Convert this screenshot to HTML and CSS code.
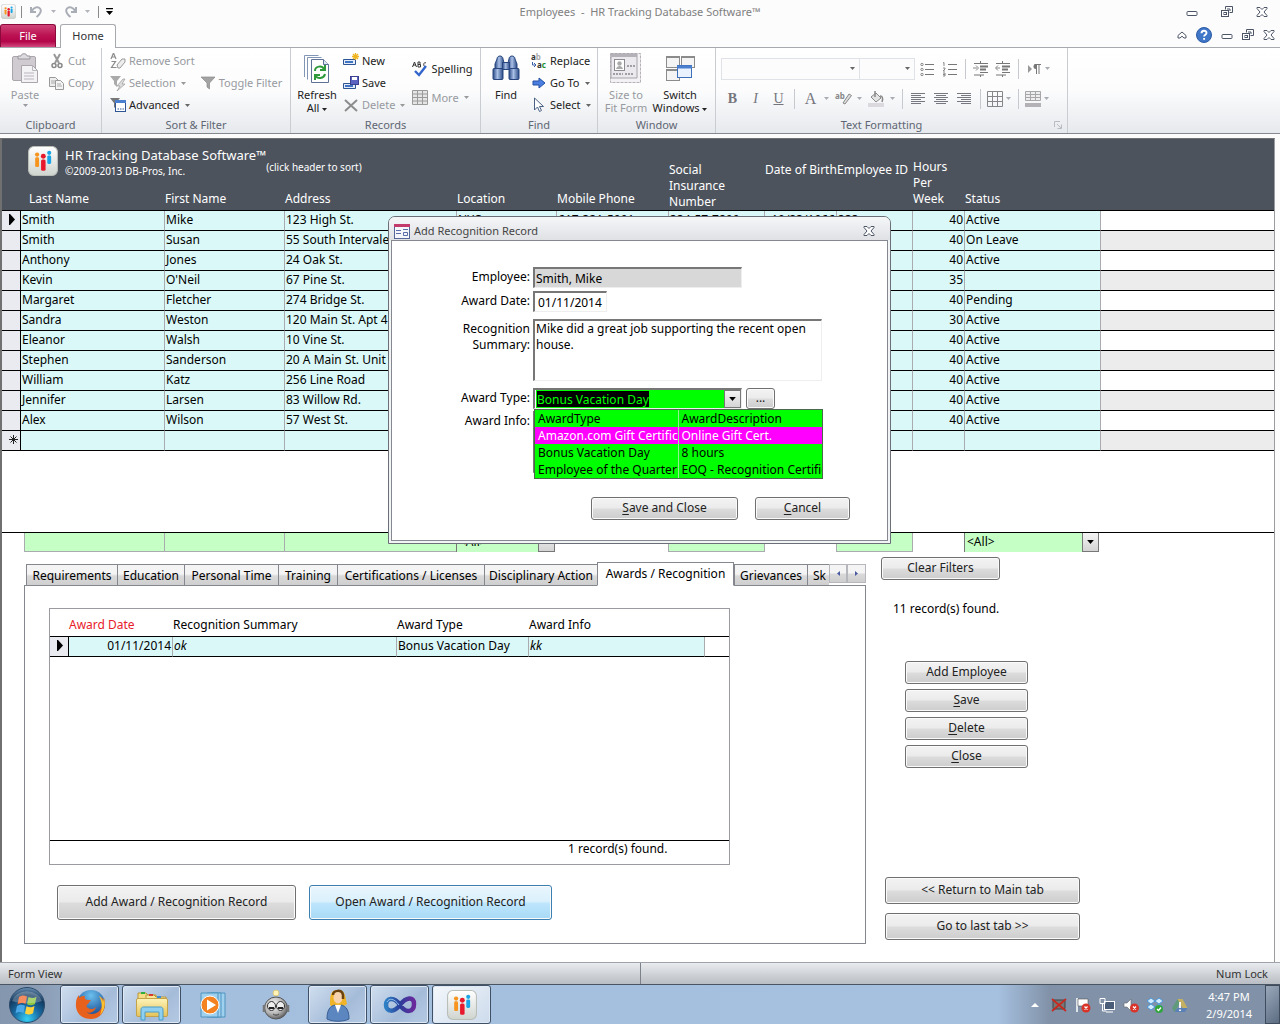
FILE: index.html
```html
<!DOCTYPE html>
<html lang="en">
<head>
<meta charset="utf-8">
<title>Employees - HR Tracking Database Software™</title>
<link rel="stylesheet" href="styles.css">
</head>
<body>
<svg class="defs" aria-hidden="true">
  <defs>
    <linearGradient id="gTile" x2="0" y2="1"><stop offset="0" stop-color="#fff"/><stop offset="1" stop-color="#cfd4cf"/></linearGradient>
    <linearGradient id="gBino" x2="1"><stop offset="0" stop-color="#2a4a86"/><stop offset=".45" stop-color="#a9c0e6"/><stop offset="1" stop-color="#2a4a86"/></linearGradient>
    <linearGradient id="gFolder" x2="0" y2="1"><stop offset="0" stop-color="#fdf3b8"/><stop offset="1" stop-color="#e6c35a"/></linearGradient>
    <linearGradient id="gInf" x2="1"><stop offset="0" stop-color="#2f7fc4"/><stop offset=".5" stop-color="#2b3f9a"/><stop offset="1" stop-color="#6a2a9c"/></linearGradient>
    <radialGradient id="gOrb" cx=".5" cy=".9" r=".9"><stop offset="0" stop-color="#35d0f5"/><stop offset=".4" stop-color="#1a6fa8"/><stop offset=".75" stop-color="#12395f"/><stop offset="1" stop-color="#6f93b5"/></radialGradient>
    <radialGradient id="gBot" cx=".4" cy=".35" r=".7"><stop offset="0" stop-color="#fff"/><stop offset=".6" stop-color="#b4b4b4"/><stop offset="1" stop-color="#555"/></radialGradient>
    <radialGradient id="gGlobe" cx=".5" cy=".2" r=".8"><stop offset="0" stop-color="#6bc0ee"/><stop offset="1" stop-color="#123f8a"/></radialGradient>
  </defs>
  <symbol id="logo" viewBox="0 0 28 28">
    <rect x=".5" y=".5" width="27" height="27" rx="5" fill="url(#gTile)" stroke="#b9beb9"/>
    <g fill="#f7941e"><circle cx="8.500" cy="8" r="2"/><rect x="6.700" y="10.600" width="3.600" height="9" rx="1.200"/></g>
    <g fill="#e8192c"><circle cx="14.300" cy="9.600" r="2.300"/><rect x="12.200" y="12.600" width="4.200" height="10.600" rx="1.400"/></g>
    <g fill="#19a5e8"><circle cx="19.800" cy="6.400" r="1.900"/><rect x="18" y="8.900" width="3.600" height="7.800" rx="1.200"/></g>
  </symbol>
  <symbol id="down" viewBox="0 0 5 3"><path d="M0 0h5L2.500 3z" fill="currentColor"/></symbol>
  <symbol id="w-min" viewBox="0 0 12 12"><rect x="1" y="5.500" width="10" height="4" rx=".8" fill="#fff" stroke="#4c5566"/></symbol>
  <symbol id="w-res" viewBox="0 0 12 12"><path d="M4.500 3.500v-3h7v6h-3" fill="none" stroke="#4c5566"/><path d="M6 3h3v2" fill="none" stroke="#4c5566"/><rect x=".5" y="4.500" width="7" height="6" fill="#fff" stroke="#4c5566"/><rect x="3" y="6.500" width="2.500" height="2" fill="none" stroke="#4c5566"/></symbol>
  <symbol id="w-x" viewBox="0 0 12 12"><path d="M1 1.500h3l2 2 2-2h3v1L8 6l3 3.500v1H8l-2-2-2 2H1v-1L4 6 1 2.500z" fill="#fff" stroke="#4c5566"/></symbol>
  <symbol id="seltri" viewBox="0 0 6 11"><path d="M0 0h1l5 5.500L1 11H0z"/></symbol>
</svg>

<header class="titlebar">
  <div class="quick">
    <svg class="app" width="15" height="15"><use href="#logo"/></svg>
    <span class="bar"></span>
    <button class="qbtn" aria-label="Undo"><svg width="13" height="13" viewBox="0 0 13 13"><path d="M1 2v5h5M1.500 6.500C4 2 8 1 10 3.500S10 9 6.500 12" fill="none" stroke="#a9adb5" stroke-width="2"/></svg></button>
    <svg class="dd" width="5" height="3"><use href="#down"/></svg>
    <button class="qbtn" aria-label="Redo"><svg width="13" height="13" viewBox="0 0 13 13"><path d="M12 2v5H7M11.500 6.500C9 2 5 1 3 3.500S3 9 6.500 12" fill="none" stroke="#a9adb5" stroke-width="2"/></svg></button>
    <svg class="dd" width="5" height="3"><use href="#down"/></svg>
    <span class="bar"></span>
    <button class="qbtn last" aria-label="Customize"><svg width="7" height="7" viewBox="0 0 7 7"><path d="M0 0h7v1.200H0zM0 3h7L3.500 7z"/></svg></button>
  </div>
  <h1 class="apptitle">Employees&nbsp; -&nbsp; HR Tracking Database Software™</h1>
  <div class="wincontrols">
    <button aria-label="Minimize"><svg width="12" height="12"><use href="#w-min"/></svg></button>
    <button aria-label="Restore"><svg width="12" height="12"><use href="#w-res"/></svg></button>
    <button aria-label="Close"><svg width="12" height="12"><use href="#w-x"/></svg></button>
  </div>
</header>

<nav class="ribbontabs">
  <button class="filetab">File</button>
  <button class="hometab">Home</button>
  <div class="childcontrols">
    <button aria-label="Collapse ribbon"><svg width="10" height="8" viewBox="0 0 10 8"><path d="M1 4.500 5 1l4 3.500V7H7L5 5.200 3 7H1z" fill="#fff" stroke="#4c5566"/></svg></button>
    <button aria-label="Help"><svg width="16" height="16" viewBox="0 0 16 16"><circle cx="8" cy="8" r="7.500" fill="#3f76c8" stroke="#2c5ca6"/><path d="M5.500 6.200c0-3.200 5-3.200 5-.2 0 1.800-2.400 1.800-2.400 3.600M8.100 11v1.800" fill="none" stroke="#fff" stroke-width="1.900"/></svg></button>
    <button aria-label="Minimize form"><svg width="12" height="12"><use href="#w-min"/></svg></button>
    <button aria-label="Restore form"><svg width="12" height="12"><use href="#w-res"/></svg></button>
    <button aria-label="Close form"><svg width="12" height="12"><use href="#w-x"/></svg></button>
  </div>
</nav>

<section class="ribbon">
  <div class="group g-clip">
    <div class="tools">
      <button class="big off">
        <svg width="28" height="32" viewBox="0 0 28 32"><rect x="1.500" y="3.500" width="23" height="24" rx="1.500" fill="#cfcbd0" stroke="#aaa6ac"/><path d="M7 6V3h3c0-3 6-3 6 0h3v3z" fill="#dedbe0" stroke="#99959c"/><path d="M10.500 12.500h11l5 5v12h-16z" fill="#f3f2f4" stroke="#aaa6ac"/><path d="M21.500 12.500v5h5M13 20h10M13 23h10M13 26h10" fill="none" stroke="#b9b6bc"/></svg>
        <span>Paste</span><svg width="5" height="3"><use href="#down"/></svg>
      </button>
      <div class="stack">
        <button class="small off"><svg width="16" height="16" viewBox="0 0 16 16"><path d="M5 1l5 9M11 1l-5 9" stroke="#999" stroke-width="2"/><circle cx="5" cy="12.500" r="2" fill="none" stroke="#888" stroke-width="1.500"/><circle cx="11" cy="12.500" r="2" fill="none" stroke="#888" stroke-width="1.500"/></svg>Cut</button>
        <button class="small off"><svg width="16" height="16" viewBox="0 0 16 16"><path d="M.5 2.500h6l3 3v6h-9z" fill="#eee" stroke="#999"/><path d="M6.500 5.500h5l3 3v6h-8z" fill="#f4f4f4" stroke="#999"/><path d="M2 6h4M2 8h4M8 9h4M8 11h5" stroke="#aaa"/></svg>Copy</button>
      </div>
    </div>
    <h2>Clipboard</h2>
  </div>
  <div class="group g-sort">
    <div class="tools">
      <div class="stack">
        <button class="small off"><svg width="16" height="16" viewBox="0 0 16 16"><path d="M1 6l2.500-6L6 6M2 4h3M1.500 8.500h4l-4 6h5" fill="none" stroke="#8c8c8c" stroke-width="1.200"/><path d="M7 12l5-6h3l0 3-5 6H8z" fill="#eee" stroke="#999"/></svg>Remove Sort</button>
        <button class="small off"><svg width="16" height="16" viewBox="0 0 16 16"><path d="M0 1h11L7 6v6L4 9V6z" fill="#aaa"/><path d="M13 4L7 11h3l-3 5 8-7h-3l3-5z" fill="#ddd" stroke="#999" stroke-width=".7"/></svg>Selection<svg class="dd" width="5" height="3"><use href="#down"/></svg></button>
        <button class="small"><svg width="16" height="16" viewBox="0 0 16 16"><path d="M0 1h10L6 6v6L4 10V6z" fill="#777"/><rect x="5.500" y="3.500" width="10" height="11" fill="#fff" stroke="#2d5596"/><path d="M5 3h11v3H5z" fill="#4a7fd0"/><path d="M7.500 12h1.500M10 12h1.500M12.500 12H14" stroke="#2d5596"/></svg>Advanced<svg class="dd" width="5" height="3"><use href="#down"/></svg></button>
      </div>
      <button class="small off toggle"><svg width="16" height="16" viewBox="0 0 16 16"><path d="M1 2h14L9.500 8v6L7 12V8z" fill="#a3a3a3" stroke="#8a8a8a" stroke-width=".7"/></svg>Toggle Filter</button>
    </div>
    <h2>Sort &amp; Filter</h2>
  </div>
  <div class="group g-rec">
    <div class="tools">
      <button class="big">
        <svg width="28" height="32" viewBox="0 0 28 32"><path d="M1.500 24V2.500h14" fill="none" stroke="#8195b5"/><path d="M4.500 26.500V4.500h14" fill="none" stroke="#8195b5"/><path d="M8.500 6.500h12l5 5v18h-17z" fill="#fff" stroke="#5d7296"/><path d="M20.500 6.500v5h5" fill="#dfe7f3" stroke="#5d7296"/><path d="M12 18c0-5 7-6 9-2M22 12v5h-5M22 21c-1 5-8 5-9 2M12 27v-5h5" fill="none" stroke="#2f9a3c" stroke-width="2"/></svg>
        <span>Refresh<br>All <svg width="5" height="3"><use href="#down"/></svg></span>
      </button>
      <div class="stack">
        <button class="small"><svg width="16" height="16" viewBox="0 0 16 16"><path d="M.5 6.500h12v5H.5z" fill="#e4ecf8" stroke="#2d5596"/><path d="M2 9h8" stroke="#3f74c4" stroke-width="2"/><path d="M12.500 0v7M9 3.500h7M10 1l5 5M15 1l-5 5" stroke="#f0b41e" stroke-width="1.300"/></svg>New</button>
        <button class="small"><svg width="16" height="16" viewBox="0 0 16 16"><path d="M.5 8.500h12v5H.5z" fill="#e4ecf8" stroke="#2d5596"/><path d="M2 11h8" stroke="#3f74c4" stroke-width="2"/><rect x="7.500" y="1.500" width="8" height="8" fill="#5b62c0" stroke="#3a3f8e"/><path d="M9 2h5v3H9z" fill="#fff"/></svg>Save</button>
        <button class="small off"><svg width="16" height="16" viewBox="0 0 16 16"><path d="M2 3l12 11M14 3L2 14" stroke="#8c8c8c" stroke-width="2"/></svg>Delete<svg class="dd" width="5" height="3"><use href="#down"/></svg></button>
      </div>
      <div class="stack two">
        <button class="small"><svg width="16" height="16" viewBox="0 0 16 16"><path d="M.5 6L2.500 1l2 5M1 4h3M6 1v5h2.500V3.500H6h2V1zM14 2c-3-2-3 5 0 3.500" fill="none" stroke="#333"/><path d="M3 10l4 4 7-9" fill="none" stroke="#3366cc" stroke-width="2.400"/></svg>Spelling</button>
        <button class="small off"><svg width="16" height="16" viewBox="0 0 16 16"><path d="M.5.500h15v14H.5zM.5 4h15M.5 7.500h15M.5 11h15M5.500.500v14M10.500.500v14" fill="#e6e6e6" stroke="#9a9a9a"/></svg>More<svg class="dd" width="5" height="3"><use href="#down"/></svg></button>
      </div>
    </div>
    <h2>Records</h2>
  </div>
  <div class="group g-find">
    <div class="tools">
      <button class="big">
        <svg width="28" height="32" viewBox="0 0 28 32"><g fill="url(#gBino)" stroke="#27457f"><path d="M5 6c0-4 6-4 6 0l1 4v6H3v-5z"/><path d="M17 6c0-4 6-4 6 0l2 5v5h-9v-6z"/><rect x="10.500" y="9.500" width="7" height="7"/><rect x="1" y="15.500" width="10" height="11" rx="1"/><rect x="17" y="15.500" width="10" height="11" rx="1"/></g></svg>
        <span>Find</span>
      </button>
      <div class="stack">
        <button class="small"><svg class="lettered" width="16" height="16" viewBox="0 0 16 16"><text x="0" y="7" class="ico-t">a<tspan class="pale">b</tspan></text><text x="6" y="15" class="ico-t">a<tspan class="green">c</tspan></text><path d="M1.500 9v3h3M3 10l2 2-2 2" fill="none" stroke="#3a5fa8"/></svg>Replace</button>
        <button class="small"><svg width="16" height="16" viewBox="0 0 16 16"><path d="M2 6h6V3l6 5-6 5v-3H2z" fill="#4a7fe0" stroke="#2450a4"/></svg>Go To<svg class="dd" width="5" height="3"><use href="#down"/></svg></button>
        <button class="small"><svg width="16" height="16" viewBox="0 0 16 16"><path d="M3.500 1v12l3-3 2 4.500 2-1-2-4h4z" fill="#fff" stroke="#4a6184"/></svg>Select<svg class="dd" width="5" height="3"><use href="#down"/></svg></button>
      </div>
    </div>
    <h2>Find</h2>
  </div>
  <div class="group g-win">
    <div class="tools">
      <button class="big off">
        <svg width="32" height="32" viewBox="0 0 32 32"><rect x=".5" y=".5" width="30" height="29" fill="#f3f1f4" stroke="#b5b1b8" stroke-dasharray="3 1"/><path d="M1 1h26v24H1z" fill="#ece9ee" stroke="#a7a3aa"/><path d="M1 1h26v3H1z" fill="#b5b1b8"/><rect x="4.500" y="6.500" width="10" height="11" fill="#fff" stroke="#8e8a91"/><circle cx="9.500" cy="10.500" r="2.200" fill="#aaa"/><path d="M6 16c1-4 6-4 7 0z" fill="#aaa"/><path d="M17 13h8M3 21h10M15 21h9" stroke="#a29ea5" stroke-width="2" stroke-dasharray="2 1"/></svg>
        <span>Size to<br>Fit Form</span>
      </button>
      <button class="big">
        <svg width="32" height="32" viewBox="0 0 32 32"><g fill="#f4f4f4" stroke="#8b8b8b"><rect x="2.500" y="3.500" width="13" height="11"/><rect x="17.500" y="3.500" width="13" height="11"/><rect x="2.500" y="16.500" width="13" height="11"/></g><path d="M2 4h14M17 4h14M2 17h14" stroke="#8b8b8b" stroke-width="2"/><rect x="13.500" y="12.500" width="14" height="12" fill="#eaf2fd" stroke="#3f6fb8"/><path d="M13 14h15" stroke="#4a7fd0" stroke-width="3"/></svg>
        <span>Switch<br>Windows <svg width="5" height="3"><use href="#down"/></svg></span>
      </button>
    </div>
    <h2>Window</h2>
  </div>
  <div class="group g-text">
    <div class="fmt">
      <div class="fmtrow">
        <span class="fontbox"><svg width="5" height="3"><use href="#down"/></svg></span><span class="sizebox"><svg width="5" height="3"><use href="#down"/></svg></span>
        <button aria-label="Bullets"><svg width="16" height="16" viewBox="0 0 16 16"><path d="M5 3.500h9M5 8.500h9M5 13.500h9" stroke="#777"/><circle cx="2" cy="3.500" r="1.200" fill="none" stroke="#888"/><circle cx="2" cy="8.500" r="1.200" fill="none" stroke="#888"/><circle cx="2" cy="13.500" r="1.200" fill="none" stroke="#888"/></svg></button>
        <button aria-label="Numbering"><svg width="16" height="16" viewBox="0 0 16 16"><path d="M6 3.500h9M6 8.500h9M6 13.500h9" stroke="#777"/><path d="M1 2l1-.5V5M1 7h2v1L1 10h2M1 12h2v3H1M1 13.500h2" fill="none" stroke="#888"/></svg></button>
        <i class="vsep"></i>
        <button aria-label="Increase indent"><svg width="16" height="16" viewBox="0 0 16 16"><path d="M1 2.500h14M7 11.500h8M1 14h10" stroke="#777"/><path d="M7 5.500h8M7 8.500h6" stroke="#777" stroke-width="2"/><path d="M7.500 0v2M7.500 14v2" stroke="#777"/><path d="M0 7h4M3 4.500L5.500 7 3 9.500" fill="none" stroke="#888"/></svg></button>
        <button aria-label="Decrease indent"><svg width="16" height="16" viewBox="0 0 16 16"><path d="M1 2.500h14M7 11.500h8M1 14h10" stroke="#777"/><path d="M7 5.500h8M7 8.500h6" stroke="#777" stroke-width="2"/><path d="M7.500 0v2M7.500 14v2" stroke="#777"/><path d="M1 7h4M3 4.500L.5 7 3 9.500" fill="none" stroke="#888"/></svg></button>
        <i class="vsep"></i>
        <button aria-label="Text direction"><svg width="14" height="12" viewBox="0 0 14 12"><path d="M1 2l4 4-4 4z" fill="#999"/><path d="M9.500 1v10M12 1v10M7.500 1.500H14" stroke="#777"/><path d="M9 1a2.500 2.500 0 000 5z" fill="#777"/></svg></button>
        <svg class="dd" width="5" height="3"><use href="#down"/></svg>
      </div>
      <div class="fmtrow wide">
        <button class="ltr" aria-label="Bold"><b>B</b></button>
        <button class="ltr" aria-label="Italic"><i>I</i></button>
        <button class="ltr" aria-label="Underline"><u>U</u></button>
        <i class="vsep"></i>
        <button class="ltr fc" aria-label="Font color">A</button><svg class="dd" width="5" height="3"><use href="#down"/></svg>
        <button aria-label="Highlight"><svg class="lettered" width="17" height="16" viewBox="0 0 17 16"><text x="0" y="8" class="ico-t grey">ab</text><path d="M8 12l6-9 2.500 1.500L10 13z" fill="#ddd" stroke="#888"/></svg></button><svg class="dd" width="5" height="3"><use href="#down"/></svg>
        <button aria-label="Fill color"><svg width="17" height="16" viewBox="0 0 17 16"><path d="M3 6l5-4 5 5-5 4z" fill="#e4e4e4" stroke="#888"/><path d="M7 0v6M12 5c3 0 3 3 2 6" fill="none" stroke="#888" stroke-width="1.500"/><path d="M0 12h16v4H0z" fill="#dcd9de"/></svg></button><svg class="dd" width="5" height="3"><use href="#down"/></svg>
        <i class="vsep"></i>
        <button aria-label="Align left"><svg width="15" height="13" viewBox="0 0 15 13"><path d="M0 1.500h14M0 3.500h10M0 5.500h14M0 7.500h10M0 9.500h14M0 11.500h10" stroke="#77777f"/></svg></button>
        <button aria-label="Center"><svg width="15" height="13" viewBox="0 0 15 13"><path d="M0 1.500h14M2 3.500h10M0 5.500h14M2 7.500h10M0 9.500h14M2 11.500h10" stroke="#77777f"/></svg></button>
        <button aria-label="Align right"><svg width="15" height="13" viewBox="0 0 15 13"><path d="M0 1.500h14M4 3.500h10M0 5.500h14M4 7.500h10M0 9.500h14M4 11.500h10" stroke="#77777f"/></svg></button>
        <i class="vsep"></i>
        <button class="grid" aria-label="Gridlines"><svg width="16" height="16" viewBox="0 0 16 16"><path d="M.5.500h15v15H.5zM.5 5.500h15M.5 10.500h15M5.500.500v15M10.500.500v15" fill="none" stroke="#85858a"/></svg></button><svg class="dd" width="5" height="3"><use href="#down"/></svg>
        <i class="vsep"></i>
        <button class="grid" aria-label="Alternate row color"><svg width="16" height="16" viewBox="0 0 16 16"><path d="M.5.500h15v9H.5zM.5 3.500h15M.5 6.500h15M5.500.500v9M10.500.500v9" fill="#eee" stroke="#a8a5ab"/><path d="M0 12h16v4H0z" fill="#b3b0b6"/></svg></button><svg class="dd" width="5" height="3"><use href="#down"/></svg>
      </div>
    </div>
    <h2>Text Formatting</h2>
    <svg class="launch" width="8" height="8" viewBox="0 0 8 8"><path d="M.5 6V.500H6M3 3l4 4M7.500 3.500v4h-4" fill="none" stroke="#b8bbc2"/></svg>
  </div>
</section>

<main class="form">
  <table class="emp">
    <colgroup><col class="c-sel"><col class="c-last"><col class="c-first"><col class="c-addr"><col class="c-loc"><col class="c-mob"><col class="c-sin"><col class="c-dob"><col class="c-id"><col class="c-hrs"><col class="c-stat"><col></colgroup>
    <thead>
      <tr class="brandrow">
        <th colspan="4">
          <div class="brand">
            <svg width="30" height="30"><use href="#logo"/></svg>
            <div class="brandtext"><strong>HR Tracking Database Software™</strong><small>©2009-2013 DB-Pros, Inc.</small></div>
            <span class="hint">(click header to sort)</span>
          </div>
        </th>
        <th colspan="2"></th>
        <th rowspan="2" class="t3">Social<br>Insurance<br>Number</th>
        <th rowspan="2" class="t3">Date of Birth</th>
        <th rowspan="2" class="t3">Employee ID</th>
        <th rowspan="2" class="low">Hours<br>Per<br>Week</th>
        <th rowspan="2" class="low">Status</th>
        <th rowspan="2"></th>
      </tr>
      <tr><th></th><th class="low first">Last Name</th><th class="low">First Name</th><th class="low">Address</th><th class="low">Location</th><th class="low">Mobile Phone</th></tr>
    </thead>
    <tbody>
      <tr><td><svg width="6" height="11"><use href="#seltri"/></svg></td><td>Smith</td><td>Mike</td><td>123 High St.</td><td>NYC</td><td>617-321-5001</td><td>334-57-7899</td><td class="r">10/23/1966</td><td>333</td><td class="r">40</td><td>Active</td><td></td></tr>
      <tr><td></td><td>Smith</td><td>Susan</td><td>55 South Intervale</td><td></td><td></td><td></td><td></td><td></td><td class="r">40</td><td>On Leave</td><td></td></tr>
      <tr><td></td><td>Anthony</td><td>Jones</td><td>24 Oak St.</td><td></td><td></td><td></td><td></td><td></td><td class="r">40</td><td>Active</td><td></td></tr>
      <tr><td></td><td>Kevin</td><td>O'Neil</td><td>67 Pine St.</td><td></td><td></td><td></td><td></td><td></td><td class="r">35</td><td></td><td></td></tr>
      <tr><td></td><td>Margaret</td><td>Fletcher</td><td>274 Bridge St.</td><td></td><td></td><td></td><td></td><td></td><td class="r">40</td><td>Pending</td><td></td></tr>
      <tr><td></td><td>Sandra</td><td>Weston</td><td>120 Main St. Apt 4</td><td></td><td></td><td></td><td></td><td></td><td class="r">30</td><td>Active</td><td></td></tr>
      <tr><td></td><td>Eleanor</td><td>Walsh</td><td>10 Vine St.</td><td></td><td></td><td></td><td></td><td></td><td class="r">40</td><td>Active</td><td></td></tr>
      <tr><td></td><td>Stephen</td><td>Sanderson</td><td>20 A Main St. Unit</td><td></td><td></td><td></td><td></td><td></td><td class="r">40</td><td>Active</td><td></td></tr>
      <tr><td></td><td>William</td><td>Katz</td><td>256 Line Road</td><td></td><td></td><td></td><td></td><td></td><td class="r">40</td><td>Active</td><td></td></tr>
      <tr><td></td><td>Jennifer</td><td>Larsen</td><td>83 Willow Rd.</td><td></td><td></td><td></td><td></td><td></td><td class="r">40</td><td>Active</td><td></td></tr>
      <tr><td></td><td>Alex</td><td>Wilson</td><td>57 West St.</td><td></td><td></td><td></td><td></td><td></td><td class="r">40</td><td>Active</td><td></td></tr>
      <tr><td><svg width="9" height="9" viewBox="0 0 9 9"><path d="M4.500 0v9M0 4.500h9M1.500 1.500l6 6M7.500 1.500l-6 6" stroke="#222"/></svg></td><td></td><td></td><td></td><td></td><td></td><td></td><td></td><td></td><td></td><td></td><td></td></tr>
    </tbody>
  </table>
  <div class="blank"></div>
  <div class="filters">
    <input aria-label="Filter last name"><input aria-label="Filter first name"><input aria-label="Filter address">
    <span class="fcombo"><select aria-label="Filter location"><option>&lt;All&gt;</option></select><span class="arrow"><svg width="7" height="4"><use href="#down"/></svg></span></span>
    <span></span><input aria-label="Filter insurance number"><span></span><input aria-label="Filter employee ID"><span></span>
    <span class="fcombo"><select aria-label="Filter status"><option>&lt;All&gt;</option></select><span class="arrow"><svg width="7" height="4"><use href="#down"/></svg></span></span>
  </div>

  <div class="lower">
    <section class="tabset">
      <div class="tabs" role="tablist">
        <button role="tab">Requirements</button><button role="tab">Education</button><button role="tab">Personal Time</button><button role="tab">Training</button><button role="tab">Certifications / Licenses</button><button role="tab">Disciplinary Action</button><button role="tab" class="active" aria-selected="true">Awards / Recognition</button><button role="tab">Grievances</button><button role="tab" class="cut">Sk</button><button class="scroll" aria-label="Scroll left"><svg width="3" height="5" viewBox="0 0 3 5"><path d="M3 0v5L0 2.500z" fill="#4a5aa0"/></svg></button><button class="scroll" aria-label="Scroll right"><svg width="3" height="5" viewBox="0 0 3 5"><path d="M0 0v5l3-2.500z" fill="#4a5aa0"/></svg></button>
      </div>
      <div class="panel">
        <div class="subform">
          <table class="awards">
            <colgroup><col class="a-sel"><col class="a-date"><col class="a-sum"><col class="a-type"><col class="a-info"><col></colgroup>
            <thead><tr><th></th><th class="red">Award Date</th><th>Recognition Summary</th><th>Award Type</th><th>Award Info</th><th></th></tr></thead>
            <tbody><tr><td><svg width="6" height="11"><use href="#seltri"/></svg></td><td class="r">01/11/2014</td><td><em>ok</em></td><td>Bonus Vacation Day</td><td><em>kk</em></td><td></td></tr></tbody>
          </table>
          <div class="subfoot">1 record(s) found.</div>
        </div>
        <div class="actions">
          <button class="btn tall">Add Award / Recognition Record</button>
          <button class="btn tall hot">Open Award / Recognition Record</button>
        </div>
      </div>
    </section>
    <aside class="side">
      <button class="btn clear">Clear Filters</button>
      <p class="count">11 record(s) found.</p>
      <div class="cmds">
        <button class="btn">Add Employee</button>
        <button class="btn"><u>S</u>ave</button>
        <button class="btn"><u>D</u>elete</button>
        <button class="btn"><u>C</u>lose</button>
      </div>
      <div class="navs">
        <button class="btn">&lt;&lt; Return to Main tab</button>
        <button class="btn">Go to last tab &gt;&gt;</button>
      </div>
    </aside>
  </div>

  <div class="dialog" role="dialog" aria-labelledby="dlgtitle">
    <div class="dlgbar">
      <svg width="16" height="15" viewBox="0 0 16 15"><rect x=".5" y=".5" width="15" height="14" fill="#f4f6fb" stroke="#54669a"/><path d="M0 0h16v3H0z" fill="#c23a6c"/><path d="M2 6.500h5M2 9.500h5" stroke="#5a6da6"/><path d="M9 5.500h5M9.500 8.500h4v3h-4z" fill="none" stroke="#5a6da6"/></svg>
      <h2 id="dlgtitle">Add Recognition Record</h2>
      <button aria-label="Close dialog"><svg width="12" height="12"><use href="#w-x"/></svg></button>
    </div>
    <div class="dlgbody">
      <div class="fields">
        <label for="emp">Employee:</label><input id="emp" class="box grey w-emp" value="Smith, Mike" readonly>
        <label for="adate">Award Date:</label><input id="adate" class="box w-date" value="01/11/2014">
        <label for="sum" class="multi">Recognition<br>Summary:</label><textarea id="sum" class="box w-full">Mike did a great job supporting the recent open house.</textarea>
        <label for="atype">Award Type:</label>
        <div class="combo">
          <div class="box combobox"><input id="atype" value="Bonus Vacation Day"><button class="arrow" aria-label="Open list"><svg width="7" height="4"><use href="#down"/></svg></button></div>
          <button class="btn dots">...</button>
          <table class="popup">
            <tr><th>AwardType</th><th>AwardDescription</th></tr>
            <tr class="on"><td>Amazon.com Gift Certificate</td><td>Online Gift Cert.</td></tr>
            <tr><td>Bonus Vacation Day</td><td>8 hours</td></tr>
            <tr><td>Employee of the Quarter</td><td>EOQ - Recognition Certificate</td></tr>
          </table>
        </div>
        <label for="ainfo">Award Info:</label><textarea id="ainfo" class="box w-full"></textarea>
      </div>
      <div class="dlgbtns">
        <button class="btn save"><u>S</u>ave and Close</button>
        <button class="btn cancel"><u>C</u>ancel</button>
      </div>
    </div>
  </div>
</main>

<footer class="status"><span>Form View</span><span class="numlock">Num Lock</span></footer>

<div class="taskbar">
  <button class="orb" aria-label="Start"><svg width="38" height="38" viewBox="0 0 38 38"><circle cx="19" cy="19" r="17.500" fill="url(#gOrb)" stroke="#2a4a6a"/><path d="M11 11c3-2 5-2 8-.5L17.500 18c-3-1.500-5-1-8 .5z" fill="#f0672a"/><path d="M20.500 11c3 1.500 5 1.500 8-.3L27 18c-3 1.500-5 1.500-8 .3z" fill="#8cc63f"/><path d="M9 20c3-1.700 5-1.700 8-.3L15.500 27c-3-1.500-5-1.300-8 .3z" fill="#4aa8e8"/><path d="M18.500 20.200c3 1.500 5 1.300 8-.3L25 27.300c-3 1.600-5 1.600-8 .2z" fill="#ffd23c"/><path d="M4 15a15.500 13 0 0130 0c-8 3-22 3-30 0z" fill="#fff" opacity=".25"/></svg></button>
  <div class="tasks">
    <button class="task" aria-label="Firefox"><svg width="32" height="32" viewBox="0 0 32 32"><circle cx="17" cy="15" r="14" fill="url(#gGlobe)"/><path d="M30 9c3 10-2 21-13 21C7 30 1 23 2 14c0-3 1-6 3-8v3c2-2 4-2 6-2-1 2 0 4 3 4h3l-3 4c-2 1-2 3 0 4 3 2 6 1 8-1-1 5-7 7-10 5 5 4 14 2 16-6 1-3 1-6-1-9 2 1 3 3 3 5z" fill="#e8611c"/><path d="M30 9c2 7 0 13-4 17 2-5 3-12-1-19 2 1 4 4 4 6z" fill="#fbc02d"/></svg></button>
    <button class="task" aria-label="Explorer"><svg width="34" height="32" viewBox="0 0 34 32"><path d="M3 4h8l2 2h8v4H3z" fill="#f4dd84" stroke="#b8963a"/><path d="M11 6h8l2 2h10v4H11z" fill="#f8e79a" stroke="#b8963a"/><path d="M6 3h4v2H6z" fill="#2fae3c"/><path d="M14 5h4v2h-4z" fill="#d8392c"/><path d="M22 7h4v2h-4z" fill="#3a8fd8"/><rect x="1.500" y="9.500" width="31" height="18" rx="1.500" fill="url(#gFolder)" stroke="#c3a24a"/><path d="M6 31V21c0-3 2-3 3-3h16c1 0 3 0 3 3v10h-4v-8H10v8z" fill="#8fd0f0" stroke="#4a9cc8"/></svg></button>
    <button class="task flat" aria-label="Media Player"><svg width="30" height="30" viewBox="0 0 30 30"><g fill="#9fd0ee" stroke="#4f94bf"><path d="M12 3h14v24H12z"/><path d="M8 3h14v24H8z"/><path d="M2 3h17v24H2z"/></g><circle cx="11" cy="15" r="9" fill="#f58220" stroke="#fff"/><path d="M8 9.500v11l9-5.500z" fill="#fff"/></svg></button>
    <button class="task flat" aria-label="Robot"><svg width="28" height="32" viewBox="0 0 28 32"><circle cx="14" cy="4" r="3" fill="#fff3b8" stroke="#d8c880"/><ellipse cx="14" cy="19" rx="11.500" ry="11" fill="url(#gBot)" stroke="#555"/><path d="M2 16v7M26 16v7" stroke="#777" stroke-width="2.500"/><ellipse cx="9.500" cy="17" rx="4" ry="4.500" fill="#eee" stroke="#333"/><ellipse cx="18.500" cy="17" rx="4" ry="4.500" fill="#eee" stroke="#333"/><path d="M7 18h5v2H7zM16 18h5v2h-5z" fill="#222"/><path d="M11 25c2 1.500 4 1.500 6 0" fill="none" stroke="#444"/></svg></button>
    <button class="task" aria-label="HR agent"><svg width="26" height="34" viewBox="0 0 26 34"><path d="M5 17C5 6 6 2 13 2s7 5 9 14l-5 3H8z" fill="#f0b429"/><ellipse cx="13" cy="9.500" rx="4.500" ry="6" fill="#f6d3ae"/><path d="M8 7c0-5 9-6 10 0v4" fill="none" stroke="#6a4210" stroke-width="2.500"/><path d="M2 31c0-9 3-13 8-14l3 4 3-4c5 1 8 5 8 14-6 3-16 3-22 0z" fill="#5b86bf" stroke="#3a5f94"/><path d="M10 17l3 8 3-8z" fill="#fff"/></svg></button>
    <button class="task" aria-label="Visual Studio"><svg width="34" height="22" viewBox="0 0 34 22"><path d="M17 11C11 2 3 4 3 11s8 8 14 0 14-9 14-1-8 10-14 1z" fill="none" stroke="url(#gInf)" stroke-width="4.500"/><path d="M4 8c2-4 7-4 12 3" fill="none" stroke="#8fc0ec" stroke-width="1"/></svg></button>
    <button class="task lit" aria-label="HR Tracking"><svg width="30" height="30"><use href="#logo"/></svg></button>
  </div>
  <div class="tray">
    <svg width="16" height="16" viewBox="0 0 16 16"><path d="M4 10l4-4 4 4z" fill="#fff"/></svg>
    <svg width="16" height="16" viewBox="0 0 16 16"><rect x="2" y="3" width="12" height="9" rx="1" fill="#777" stroke="#444"/><path d="M1 2l14 12M15 2L1 14" stroke="#c8281e" stroke-width="1.700"/></svg>
    <svg width="16" height="16" viewBox="0 0 16 16"><path d="M2 1v14" stroke="#fff" stroke-width="1.500"/><path d="M3 2h10v7H3z" fill="#fff" stroke="#555" stroke-width=".6"/><circle cx="11" cy="11" r="4.500" fill="#d8342a"/><path d="M9.500 9.500l3 3M12.500 9.500l-3 3" stroke="#fff" stroke-width="1.300"/></svg>
    <svg width="16" height="16" viewBox="0 0 16 16"><rect x="5.500" y="4.500" width="10" height="8" fill="#4a5d78" stroke="#fff"/><path d="M7 15h7M1 1.500h5v5H1zM3.500 7v7h4" fill="none" stroke="#fff"/></svg>
    <svg width="16" height="16" viewBox="0 0 16 16"><path d="M1 6h3l4-4v12L4 10H1z" fill="#fff" stroke="#666" stroke-width=".6"/><circle cx="11.500" cy="11" r="4.500" fill="#d8342a"/><path d="M10 9.500l3 3M13 9.500l-3 3" stroke="#fff" stroke-width="1.300"/></svg>
    <svg width="17" height="16" viewBox="0 0 17 16"><path d="M4 1l4 3-4 3-4-3zM12 1l4 3-4 3-4-3zM4 7l4 3-4 3-4-3zM12 7l4 3-4 3-4-3z" fill="#cfeaff" stroke="#3a8fd8" stroke-width=".8"/><circle cx="12" cy="12" r="4" fill="#2fa53c"/><path d="M10 12l1.500 1.500L14 10.500" fill="none" stroke="#fff" stroke-width="1.300"/></svg>
    <svg width="16" height="16" viewBox="0 0 16 16"><path d="M5.500 2L0 11l2.500 4L8 6z" fill="#5f9a7a"/><path d="M5.500 2h5l5 9h-5z" fill="#c4b060"/><path d="M2.500 15l3-4h10L13 15z" fill="#5a80b8"/><path d="M8 5v6M8 12.500V14" stroke="#fff" stroke-width="1.800"/></svg>
  </div>
  <div class="clock"><span>4:47 PM</span><span>2/9/2014</span></div>
  <button class="desk" aria-label="Show desktop"></button>
</div>
</body>
</html>
```
FILE: styles.css
```css
:root {
  --ui: "Noto Sans", "Open Sans", sans-serif;
  --cyan: #daf8f8;
  --filter: #c5ffc5;
}
* { box-sizing: border-box; }
body {
  margin: 0;
  min-height: 100vh;
  display: flex;
  flex-direction: column;
  background: #fcfcfd;
  font: 11px/16px var(--ui);
  color: #222;
}
button, input, select, textarea { font: inherit; color: inherit; margin: 0; padding: 0; border: 0; background: none; border-radius: 0; }
button { display: inline-flex; align-items: center; justify-content: center; white-space: nowrap; }
h1, h2, p { margin: 0; font-size: inherit; font-weight: normal; }
svg { flex: none; display: block; }
.defs { position: absolute; width: 0; height: 0; }

/* Title bar */
.titlebar { display: grid; grid-template-columns: 1fr auto 1fr; align-items: center; height: 23px; }
.quick { display: flex; align-items: center; gap: 8px; padding-left: 1px; height: 21px; color: #b0b3b9; }
.quick .bar { width: 1px; height: 12px; background: #8a8a8a; }
.quick .app { margin-right: -3px; }
.quick .qbtn { min-width: 12px; }
.quick .qbtn.last { margin-left: -4px; }
.apptitle { color: #808080; text-align: center; }
.wincontrols { display: flex; justify-content: flex-end; gap: 23px; padding-right: 12px; }

/* Ribbon tabs */
.ribbontabs { display: flex; gap: 4px; height: 25px; padding-top: 1px; border-bottom: 1px solid #a6a9ae; }
.filetab { width: 56px; height: 23px; color: #fff; border: 1px solid #8b0a3c; border-bottom: 0; border-radius: 3px 3px 0 0; background: linear-gradient(#cf4479, #ba0f50 50%, #b3064a 75%, #d4497f); }
.hometab { width: 56px; height: 24px; padding-bottom: 1px; color: #333; border: 1px solid #a6a9ae; border-bottom: 0; border-radius: 3px 3px 0 0; background: #fff; }
.childcontrols { margin-left: auto; display: flex; align-items: center; gap: 9px; padding-right: 5px; height: 22px; }

/* Ribbon groups */
.ribbon { display: flex; height: 86px; background: linear-gradient(#fff, #fcfcfd 50%, #e6e9ed); border-bottom: 1px solid #85898f; }
.group { position: relative; display: flex; flex-direction: column; border-right: 1px solid #c9ccd1; }
.group h2 { text-align: center; color: #5f6673; }
.tools { display: flex; height: 69px; padding-top: 2px; }
.g-clip { width: 102px; }
.g-sort { width: 189px; }
.g-rec { width: 190px; }
.g-find { width: 117px; }
.g-win { width: 118px; }
.g-text { width: 352px; }
.g-clip .tools { padding-left: 7px; }
.g-sort .tools { padding-left: 8px; }
.g-rec .tools { padding-left: 4px; }
.g-find .tools { padding-left: 6px; }
.g-win .tools { padding-left: 1px; }
.big { flex-direction: column; justify-content: flex-start; gap: 3px; width: 36px; padding-top: 3px; line-height: 13px; }
.big span svg { display: inline-block; vertical-align: middle; }
.g-rec .big { width: 44px; }
.g-find .big { width: 38px; }
.g-win .big { width: 54px; }
.stack { display: grid; grid-template-rows: repeat(3, 22px); justify-items: start; margin-left: 6px; }
.g-sort .stack { margin-left: 0; }
.g-rec .stack { margin-left: 4px; }
.stack.two { grid-template-rows: 29px 29px; padding-top: 4px; }
.g-rec .stack.two { margin-left: 7px; }
.small { gap: 3px; color: #222; }
.off { color: #979aa0; }
.small .dd { margin-left: 2px; color: #666; }
.small.off .dd { color: #999; }
.toggle { align-self: start; height: 22px; margin-top: 22px; margin-left: 5px; }
.lettered { overflow: visible; }
.ico-t { font: bold 8px var(--ui); fill: #333; }
.ico-t.grey { fill: #888; }
.ico-t .pale { fill: #aaa; }
.ico-t .green { fill: #1d8f2c; }
.fmt { height: 69px; padding: 9px 0 0 5px; display: flex; flex-direction: column; gap: 7px; }
.g-text h2 { padding-right: 20px; }
.fmtrow { display: flex; align-items: center; height: 23px; color: #a9acb2; }
.fmtrow button { width: 22px; }
.fmtrow.wide button { width: 23px; }
.fmtrow.wide .dd { margin: 0 3px 0 2px; }
.fmtrow.wide .grid { width: 19px; }
.fmtrow .vsep { width: 1px; height: 20px; margin: 0 4px; background: #c6c9ce; }
.fontbox, .sizebox { height: 22px; border: 1px solid #dfe3e8; display: flex; align-items: center; justify-content: flex-end; padding-right: 4px; color: #666; background: #fcfcfc; }
.fontbox { width: 139px; }
.sizebox { width: 55px; border-left: 0; margin-right: 2px; }
.fmtrow .ltr { font: 14px "Liberation Serif", serif; color: #75757d; }
.fmtrow .ltr.fc { font-size: 16px; }
.launch { position: absolute; right: 5px; bottom: 4px; }

/* Form area */
.form {
  position: relative;
  flex: 1;
  display: flex;
  flex-direction: column;
  margin: 4px 5px 0 0;
  border: 1px solid #707070;
  border-left-width: 2px;
  border-right-color: #9a9ca0;
  border-bottom: 0;
  background: #fff;
  color: #000;
  font: 12px/16px var(--ui);
}
table { border-collapse: separate; border-spacing: 0; table-layout: fixed; width: 100%; }
th { font-weight: normal; text-align: left; padding: 0; white-space: nowrap; }
td { padding: 0 0 2px 1px; white-space: nowrap; overflow: hidden; }
.r { text-align: right; padding-right: 1px; }
.c-sel, .a-sel { width: 19px; } .c-last { width: 144px; } .c-first { width: 120px; } .c-addr { width: 172px; }
.c-loc { width: 100px; } .c-mob { width: 112px; } .c-sin { width: 96px; } .c-dob { width: 72px; }
.c-id { width: 76px; } .c-hrs { width: 52px; } .c-stat { width: 136px; }
.emp thead { background: #4d535d; color: #fff; }
.emp th { vertical-align: top; height: 27px; }
.emp .brandrow th { height: 45px; }
.emp tr:last-child th, .emp th[rowspan] { border-bottom: 1px solid #000; }
.emp .t3 { padding-top: 23px; }
.emp .low { vertical-align: bottom; padding-bottom: 3px; }
.emp .first { padding-left: 8px; }
.brand { display: flex; padding: 7px 0 0 26px; }
.brandtext { display: flex; flex-direction: column; margin-left: 7px; }
.brandtext strong { font-weight: normal; font-size: 13px; line-height: 18px; }
.brandtext small, .hint { font-size: 10px; line-height: 15px; }
.hint { margin-top: 14px; }
.emp td, .awards td { height: 20px; background: var(--cyan); border-right: 1px solid #a9abae; border-bottom: 1px solid #000; }
.emp td:first-child, .awards td:first-child { background: #e9ebf0; border-right-color: #000; padding-left: 7px; }
.emp td:last-child, .awards td:last-child { background: #fff; border-right: 0; }
.emp tbody tr:nth-child(even) td:last-child { background: #ececec; }
.blank { height: 82px; border-bottom: 1px solid #000; }

.filters { display: grid; grid-template-columns: 140px 120px 172px 99px 113px 97px 71px 77px 51px 135px; padding-left: 22px; height: 19px; }
.filters input { min-width: 0; background: var(--filter); border: 1px solid #a9abae; border-width: 0 0 1px 1px; }
.filters input:nth-child(6), .filters input:nth-child(8) { border-right-width: 1px; }
.fcombo { display: flex; background: var(--filter); border-left: 1px solid #777; }
.fcombo select { flex: 1; appearance: none; padding: 0 0 2px 2px; line-height: 16px; }
.arrow { width: 17px; display: flex; align-items: center; justify-content: center; background: linear-gradient(#f4f4f4, #d4d4d4); border: 1px solid #777; border-top-width: 0; }

/* Lower part: tab pages and side commands */
.lower { display: grid; grid-template-columns: minmax(0, 1fr) 408px; padding-left: 22px; }
.tabset { padding-top: 10px; }
.tabs { display: grid; grid-template-columns: 91px 67px 94px 59px 147px 113px 137px 73px 22px 18px 19px; align-items: end; padding-left: 2px; height: 24px; }
.tabs button { height: 22px; padding-top: 2px; border: 1px solid #85878f; border-right-width: 0; background: linear-gradient(#f4f4f4 45%, #d9d9d9 55%, #cfcfcf); }
.tabs .active { position: relative; height: 24px; padding-bottom: 3px; background: #fff; border-right-width: 1px; border-bottom-color: #fff; }
.tabs .cut { justify-content: flex-start; padding-left: 5px; overflow: hidden; }
.tabs .scroll { height: 19px; align-self: start; margin-top: 2px; padding: 0; border-right-width: 1px; border-color: #b5b7bd; }
.panel { border: 1px solid #85878f; margin-top: -1px; padding: 22px 24px 0; height: 359px; }
.subform { width: 681px; height: 257px; border: 1px solid #999ba0; display: flex; flex-direction: column; }
.a-date { width: 104px; } .a-sum { width: 224px; } .a-type { width: 132px; } .a-info { width: 176px; }
.awards th { height: 28px; border-bottom: 1px solid #000; padding-top: 5px; }
.awards .red { color: #e8202a; }
.subfoot { margin-top: auto; height: 24px; border-top: 1px solid #000; padding-left: 518px; }
.actions { display: flex; gap: 13px; margin: 20px 0 0 8px; }

.btn { height: 23px; color: #222; border: 1px solid #707070; border-radius: 3px; background: linear-gradient(#f3f3f3, #ebebeb 48%, #dcdcdc 52%, #cdcdcd); box-shadow: inset 0 0 0 1px #fafafa; padding-bottom: 2px; }
.btn u { text-underline-offset: 2px; }
.tall { width: 239px; height: 35px; }
.tall.hot { width: 243px; border-color: #3c7fb1; background: linear-gradient(#eaf6fd, #d9f0fc 48%, #bee6fd 52%, #a7d9f5); }
.side { display: flex; flex-direction: column; align-items: flex-start; padding: 5px 0 0 15px; }
.clear { width: 119px; }
.count { margin: 21px 0 0 12px; }
.cmds { display: flex; flex-direction: column; gap: 5px; width: 123px; margin: 44px 0 0 24px; }
.navs { display: flex; flex-direction: column; gap: 9px; width: 195px; margin: 109px 0 0 4px; }
.navs .btn { height: 27px; }

/* Dialog floating over the form */
.dialog { position: absolute; left: 386px; top: 77px; width: 503px; height: 328px; padding: 0 2px 2px; border: 1px solid #6b7078; border-radius: 7px 7px 0 0; background: #f2f3f5; display: flex; flex-direction: column; }
.dlgbar { display: flex; align-items: center; gap: 4px; height: 23px; padding: 5px 15px 0 5px; margin: 0 -2px; border-radius: 6px 6px 0 0; background: linear-gradient(#f5f6f8, #dfe1e5); font-size: 11px; }
.dlgbar h2 { flex: 1; color: #444; }
.dlgbody { flex: 1; padding-top: 26px; border: 1px solid #85898f; background: #fff; }
.fields { display: grid; grid-template-columns: 138px 289px; grid-template-rows: 24px 28px 69px 23px 62px; column-gap: 3px; align-items: start; }
.fields label { text-align: right; padding-top: 2px; }
.box { border: 1px solid #eee; border-top: 2px solid #777; border-left: 2px solid #777; padding-left: 1px; height: 21px; background: #fff; }
.box.grey { background: #d8d8d8; }
.w-emp { width: 209px; }
.w-date { width: 74px; padding-left: 3px; }
.w-full { width: 289px; height: 62px; resize: none; overflow: hidden; display: block; }
.combo { position: relative; display: flex; gap: 4px; }
.combobox { display: flex; width: 209px; background: #fff; }
.combobox input { flex: 1; min-width: 0; height: 18px; padding-left: 1px; color: #00ff00; background: linear-gradient(#000, #000) 1px 1px / 112px 16px no-repeat #00ff00; }
.combobox .arrow { height: 18px; border-top-width: 1px; padding: 0; }
.dots { width: 29px; height: 21px; }
.popup { position: absolute; left: 1px; top: 21px; width: 289px; border: 1px solid #4b6a4b; background: #00ff00; z-index: 1; }
.popup th, .popup td { height: 17px; padding: 0 0 0 3px; line-height: 16px; overflow: hidden; }
.popup th:first-child, .popup td:first-child { border-right: 1px solid #9be89b; }
.popup .on td { background: #ff00ff; color: #fff; }
.dlgbtns { display: flex; gap: 17px; margin: 24px 0 0 199px; }
.save { width: 147px; }
.cancel { width: 95px; }

/* Status bar and taskbar */
.status { display: flex; justify-content: space-between; align-items: center; height: 23px; padding: 0 12px 0 8px; border-top: 1px solid #9ea3ab; border-bottom: 1px solid #4a5563; background: linear-gradient(#7d828a, #7d828a) 50% 0 / 1px 100% no-repeat, linear-gradient(#e9ebee, #b9bec4); color: #333; }
.taskbar { display: flex; align-items: center; height: 39px; background: linear-gradient(90deg, #8496ad 0, #8b9db5 40px, #a4bedd 130px, #a6c0df 78%, #8192a8 82%, #8192a8); }
.orb { width: 60px; padding-right: 6px; }
.tasks { display: flex; gap: 3px; }
.task { width: 59px; height: 39px; border: 1px solid #3f5166; border-radius: 3px; box-shadow: inset 0 0 0 1px #dfe9f5; background: linear-gradient(135deg, #d0deef, #a5bcd9 60%, #b4c9e3); }
.task.flat { border-color: transparent; background: none; box-shadow: none; }
.task.lit { background: linear-gradient(135deg, #f3f7fb, #cddbec); }
.tray { margin-left: auto; display: flex; gap: 8px; padding-right: 18px; }
.clock { display: flex; flex-direction: column; align-items: center; width: 46px; margin-right: 13px; line-height: 17px; color: #fff; }
.desk { width: 15px; height: 39px; border: 1px solid #3e4c5e; background: linear-gradient(135deg, #9aa8ba, #5c6c82); }
```
